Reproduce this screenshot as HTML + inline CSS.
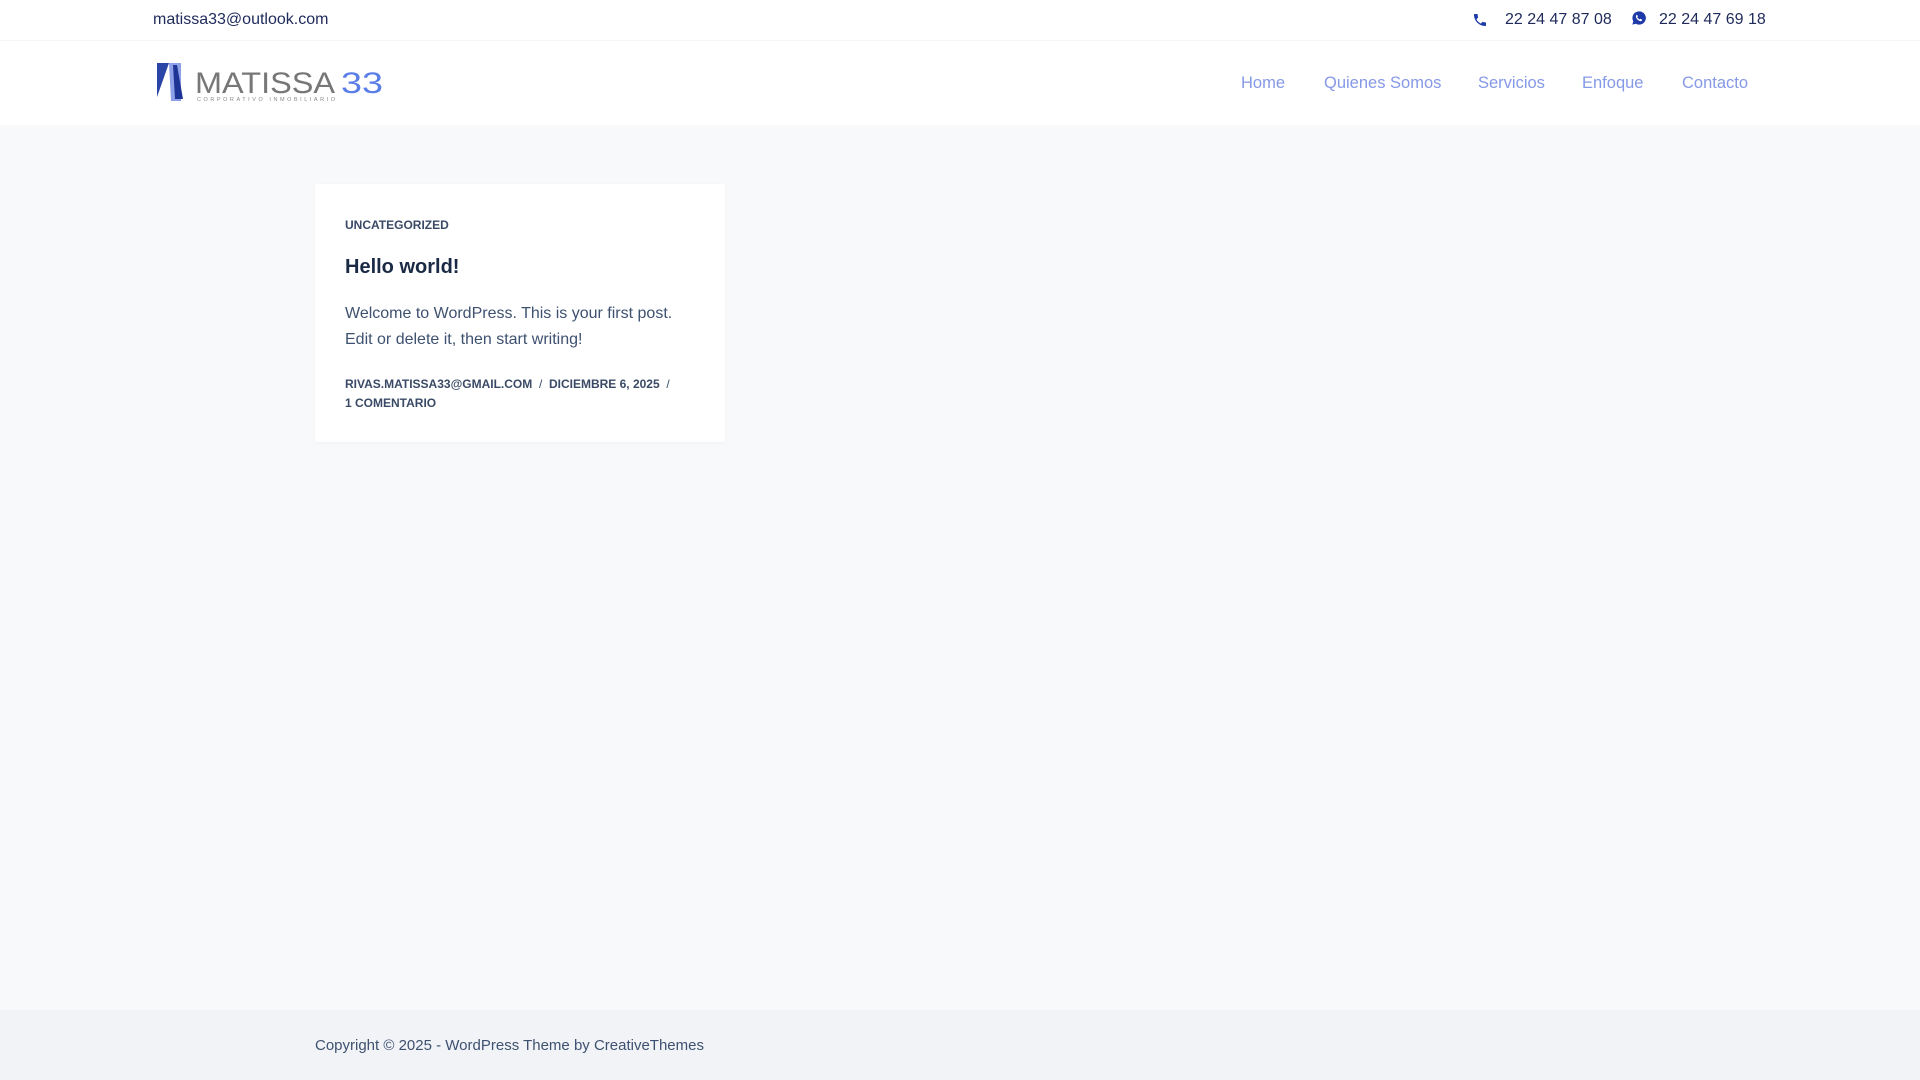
<!DOCTYPE html>
<html><head><meta charset="utf-8"><style>
*{margin:0;padding:0;box-sizing:border-box}
body{width:1920px;height:1080px;background:#f8f9fb;font-family:"Liberation Sans",sans-serif;position:relative;overflow:hidden}
.top{position:absolute;left:0;top:0;width:1920px;height:40px;background:#fff;color:#1e2a5a;font-size:16px}
.nav{position:absolute;left:0;top:40px;width:1920px;height:85px;background:#fff;border-top:1px solid #f3f4f6}
.nav a{position:absolute;top:33px;color:#8599e6;font-size:16.5px;text-decoration:none}
.card{position:absolute;left:315px;top:184px;width:410px;height:258px;background:#fff;box-shadow:0 1px 4px rgba(0,0,0,0.04)}
.card .cat{position:absolute;left:30px;top:34px;font-size:12px;font-weight:bold;color:#3a4a66}
.card h2{position:absolute;left:30px;top:72px;font-size:20px;color:#1a2a44}
.card p{position:absolute;left:30px;top:117px;width:345px;font-size:16px;line-height:26px;color:#3e5170}
.meta{position:absolute;left:30px;font-size:12px;font-weight:bold;color:#3a4a66}
.foot{position:absolute;left:0;top:1010px;width:1920px;height:70px;background:#f1f3f7;color:#3e5170;font-size:15px}
</style></head><body>
<div class="top">
<div style="position:absolute;left:153px;top:11px">matissa33@outlook.com</div>
<svg style="position:absolute;left:1472px;top:12px" width="16" height="16" viewBox="0 0 24 24"><path fill="#1e3aa8" d="M6.6 10.8c1.4 2.8 3.8 5.1 6.6 6.6l2.2-2.2c.3-.3.7-.4 1-.2 1.1.4 2.3.6 3.6.6.6 0 1 .4 1 1V20c0 .6-.4 1-1 1C10.6 21 3 13.4 3 4c0-.6.4-1 1-1h3.5c.6 0 1 .4 1 1 0 1.3.2 2.5.6 3.6.1.3 0 .7-.2 1z"/></svg>
<div style="position:absolute;left:1505px;top:11px">22 24 47 87 08</div>
<svg style="position:absolute;left:1631px;top:10px" width="16" height="16" viewBox="0 0 24 24"><path fill="#1e3aa8" d="M12 2a10 10 0 0 0-8.6 15L2 22l5.2-1.4A10 10 0 1 0 12 2z"/><path fill="#fff" d="M8.5 7c.3 0 .6 0 .8.5l.9 2c.1.3 0 .5-.2.7l-.6.7c.8 1.5 2 2.6 3.6 3.3l.7-.8c.2-.2.4-.2.7-.1l2 1c.3.1.4.4.3.7-.2 1-1.2 1.8-2.3 1.8-3 0-7-3.9-7-7 0-1.3.8-2.5 1.6-2.8z"/></svg>
<div style="position:absolute;left:1659px;top:11px">22 24 47 69 18</div>
</div>
<div class="nav">
<svg style="position:absolute;left:155px;top:20px" width="240" height="42" viewBox="0 0 240 42">
<polygon points="2,2 14,2 2,36" fill="#2a44a8"/><polygon points="14,2 26,2 26,40 16,40" fill="#8da0e8"/><polygon points="18,4 22,4 28,38 20,38" fill="#1f3595"/>
<text x="40" y="32" font-family="Liberation Sans" font-size="30" fill="#777" textLength="140" lengthAdjust="spacingAndGlyphs">MATISSA</text>
<text x="186" y="32" font-family="Liberation Sans" font-size="30" fill="#5a7ee8" textLength="42" lengthAdjust="spacingAndGlyphs">33</text>
<text x="42" y="40" font-family="Liberation Sans" font-size="5.5" fill="#888" textLength="138" lengthAdjust="spacing">CORPORATIVO INMOBILIARIO</text>
</svg>
<a style="left:1241px">Home</a><a style="left:1324px">Quienes Somos</a><a style="left:1478px">Servicios</a><a style="left:1582px">Enfoque</a><a style="left:1682px">Contacto</a>
</div>
<div class="card">
<div class="cat">UNCATEGORIZED</div>
<h2>Hello world!</h2>
<p>Welcome to WordPress. This is your first post. Edit or delete it, then start writing!</p>
<div class="meta" style="top:193px">RIVAS.MATISSA33@GMAIL.COM &nbsp;<span style="font-weight:normal">/</span>&nbsp; DICIEMBRE 6, 2025 &nbsp;<span style="font-weight:normal">/</span></div>
<div class="meta" style="top:212px">1 COMENTARIO</div>
</div>
<div class="foot"><div style="position:absolute;left:315px;top:27px">Copyright © 2025 - WordPress Theme by CreativeThemes</div></div>
</body></html>
